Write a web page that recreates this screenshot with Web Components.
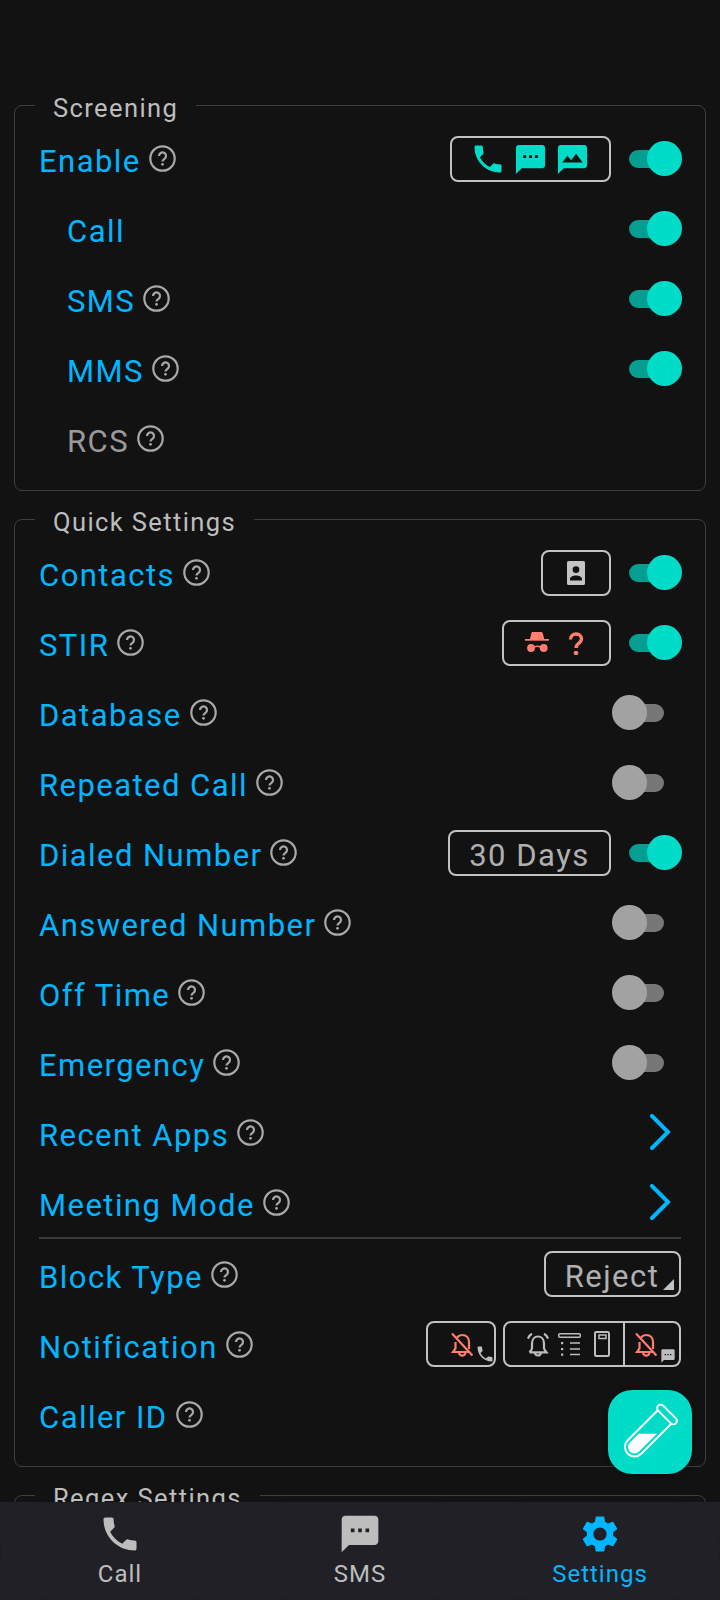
<!DOCTYPE html>
<html>
<head>
<meta charset="utf-8">
<style>
  html, body { margin: 0; padding: 0; background: #121212; }
  body { font-family: Roboto, "Liberation Sans", sans-serif; }
</style>
</head>
<body>
<app-shell>
  <settings-group legend="Screening">
    <setting-row help>Enable
      <chip-box slot="end" width="161" style="padding-right:2px">
        <ui-icon name="phone" size="36" color="#00dcc8"></ui-icon>
        <ui-icon name="sms" size="35" color="#00dcc8" gap="7"></ui-icon>
        <ui-icon name="mms" size="35" color="#00dcc8" gap="7"></ui-icon>
      </chip-box>
      <toggle-switch slot="end" checked></toggle-switch>
    </setting-row>
    <setting-row indent>Call<toggle-switch slot="end" checked></toggle-switch></setting-row>
    <setting-row indent help>SMS<toggle-switch slot="end" checked></toggle-switch></setting-row>
    <setting-row indent help>MMS<toggle-switch slot="end" checked></toggle-switch></setting-row>
    <setting-row indent help muted>RCS</setting-row>
  </settings-group>

  <settings-group legend="Quick Settings">
    <setting-row help>Contacts
      <chip-box slot="end" width="70"><ui-icon name="contact" size="24" color="#c4c4c4"></ui-icon></chip-box>
      <toggle-switch slot="end" checked></toggle-switch>
    </setting-row>
    <setting-row help>STIR
      <chip-box slot="end" width="109" style="padding-right:1px">
        <ui-icon name="incognito" size="24" color="#ff7e6e"></ui-icon>
        <ui-icon name="question" size="24" color="#ff7e6e" gap="15"></ui-icon>
      </chip-box>
      <toggle-switch slot="end" checked></toggle-switch>
    </setting-row>
    <setting-row help>Database<toggle-switch slot="end"></toggle-switch></setting-row>
    <setting-row help>Repeated Call<toggle-switch slot="end"></toggle-switch></setting-row>
    <setting-row help>Dialed Number
      <chip-box slot="end" width="163" text>30 Days</chip-box>
      <toggle-switch slot="end" checked></toggle-switch>
    </setting-row>
    <setting-row help>Answered Number<toggle-switch slot="end"></toggle-switch></setting-row>
    <setting-row help>Off Time<toggle-switch slot="end"></toggle-switch></setting-row>
    <setting-row help>Emergency<toggle-switch slot="end"></toggle-switch></setting-row>
    <setting-row help>Recent Apps<ui-icon slot="end" name="chevron" size="36" color="#00b6ff"></ui-icon></setting-row>
    <setting-row help>Meeting Mode<ui-icon slot="end" name="chevron" size="36" color="#00b6ff"></ui-icon></setting-row>
    <group-divider></group-divider>
    <setting-row help>Block Type
      <chip-box slot="end" width="137" text caret>Reject</chip-box>
    </setting-row>
    <setting-row help>Notification
      <notify-chips slot="end"></notify-chips>
    </setting-row>
    <setting-row help>Caller ID</setting-row>
  </settings-group>

  <settings-group legend="Regex Settings"></settings-group>
</app-shell>

<script>
const ICONS = {
  phone: '<path fill="currentColor" d="M6.62 10.79c1.44 2.83 3.76 5.14 6.59 6.59l2.2-2.2c.27-.27.67-.36 1.02-.24 1.12.37 2.33.57 3.57.57.55 0 1 .45 1 1V20c0 .55-.45 1-1 1-9.39 0-17-7.61-17-17 0-.55.45-1 1-1h3.5c.55 0 1 .45 1 1 0 1.25.2 2.45.57 3.57.11.35.03.74-.25 1.02l-2.2 2.2z"/>',
  sms: '<path fill="currentColor" d="M20 2H4c-1.1 0-1.99.9-1.99 2L2 22l4-4h14c1.1 0 2-.9 2-2V4c0-1.1-.9-2-2-2zM9 11H7V9h2v2zm4 0h-2V9h2v2zm4 0h-2V9h2v2z"/>',
  mms: '<path fill="currentColor" d="M20 2H4c-1.1 0-1.99.9-1.99 2L2 22l4-4h14c1.1 0 2-.9 2-2V4c0-1.1-.9-2-2-2zM5 14l3.5-4.5 2.5 3.01L14.5 8l4.5 6H5z"/>',
  settings: '<path fill="currentColor" d="M19.14 12.94c.04-.3.06-.61.06-.94 0-.32-.02-.64-.07-.94l2.03-1.58c.18-.14.23-.41.12-.61l-1.92-3.32c-.12-.22-.37-.29-.59-.22l-2.39.96c-.5-.38-1.03-.7-1.62-.94l-.36-2.54c-.04-.24-.24-.41-.48-.41h-3.84c-.24 0-.43.17-.47.41l-.36 2.54c-.59.24-1.13.57-1.62.94l-2.39-.96c-.22-.08-.47 0-.59.22L2.74 8.87c-.12.21-.08.47.12.61l2.03 1.58c-.05.3-.09.63-.09.94s.02.64.07.94l-2.03 1.58c-.18.14-.23.41-.12.61l1.92 3.32c.12.22.37.29.59.22l2.39-.96c.5.38 1.03.7 1.62.94l.36 2.54c.05.24.24.41.48.41h3.84c.24 0 .44-.17.47-.41l.36-2.54c.59-.24 1.13-.56 1.62-.94l2.39.96c.22.08.47 0 .59-.22l1.92-3.32c.12-.22.07-.47-.12-.61l-2.01-1.58zM12 15.6c-1.98 0-3.6-1.62-3.6-3.6s1.62-3.6 3.6-3.6 3.6 1.62 3.6 3.6-1.62 3.6-3.6 3.6z"/>',
  contact: '<path fill="currentColor" fill-rule="evenodd" d="M4.5 0h15A1.5 1.5 0 0 1 21 1.5v21a1.5 1.5 0 0 1-1.5 1.5h-15A1.5 1.5 0 0 1 3 22.5v-21A1.5 1.5 0 0 1 4.5 0zM12 5.2a3.4 3.4 0 1 0 0 6.8 3.4 3.4 0 0 0 0-6.8zM6 19.4h12v-1.6c0-2.3-3.8-3.4-6-3.4s-6 1.100-6 3.400z"/>',
  incognito: '<g fill="currentColor"><path d="M5 8 6.300 2.200C6.500 1.300 7.100 1 8 1h8c.9 0 1.500.3 1.800 1.200L19.200 8z"/><rect x="0" y="8" width="24" height="1.700"/><circle cx="6" cy="17" r="3.900"/><circle cx="18.700" cy="17" r="3.900"/></g><path d="M9 16.300q3.300-2 6.500 0" fill="none" stroke="currentColor" stroke-width="1.500"/>',
  question: '<path d="M6.500 8.500C6.500 4.500 9.300 3 12 3c3 0 5.500 1.800 5.500 5 0 4.200-5.500 4.200-5.500 9" fill="none" stroke="currentColor" stroke-width="3.400"/><circle cx="12" cy="22" r="2.300" fill="currentColor"/>',
  chevron: '<path d="M7 2 23 18 7 34" fill="none" stroke="currentColor" stroke-width="4" stroke-linecap="round"/>',
  belloff: '<g fill="none" stroke="currentColor" stroke-width="2.200"><path d="M6 5.500C7.300 3.900 9.200 3 11.300 3c4 0 6.700 3 6.700 7.500V17"/><path d="M4.500 10v6.500L2 20h17"/><path d="M8 20.500a3.200 3.200 0 0 0 6.400 0"/></g><path d="M1 1.500 21.500 23.500" stroke="currentColor" stroke-width="2.200"/>',
  bellalarm: '<g fill="none" stroke="currentColor" stroke-width="2.200"><path d="M5 17V11.500c0-4.200 2.600-7 6-7s6 2.800 6 7V17"/><path d="M2.500 20.300h17L17 17M2.500 20.300 5 17"/><path d="M8 20.500a3 3 0 0 0 6 0"/><path d="M1 6.500C1.800 4.300 3 2.800 4.900 1.700M21 6.500c-.8-2.200-2-3.700-3.900-4.800"/></g>',
  bars: '<g fill="none" stroke="currentColor"><rect x=".75" y="1.750" width="21.500" height="3.500" rx="1" stroke-width="1.500"/><path d="M12 11h10M12 17h10M12 22.500h10" stroke-width="1.700"/></g><g fill="currentColor"><rect x="3" y="10" width="2.200" height="2.200"/><rect x="3" y="16" width="2.200" height="2.200"/><rect x="3" y="21.500" width="2.200" height="2.200"/></g>',
  device: '<g fill="none" stroke="currentColor"><rect x="1" y="1" width="14" height="24" rx="1.200" stroke-width="2"/><rect x="5" y="4" width="7" height="3.500" stroke-width="1.500"/></g>'
};
const VIEW = { chevron: "0 0 36 36", belloff: "0 0 22 25", bellalarm: "0 0 22 25", bars: "0 0 23 25", device: "0 0 16 26" };

class UiIcon extends HTMLElement {
  connectedCallback() {
    const name = this.getAttribute("name");
    const size = this.getAttribute("size") || 24;
    const w = this.getAttribute("w") || size;
    const color = this.getAttribute("color") || "currentColor";
    const gap = this.getAttribute("gap") || 0;
    this.attachShadow({ mode: "open" }).innerHTML = `
      <style>
        :host { display: block; flex: none; line-height: 0; color: ${color}; margin-left: ${gap}px; }
        svg { display: block; }
      </style>
      <svg width="${w}" height="${size}" viewBox="${VIEW[name] || "0 0 24 24"}">${ICONS[name]}</svg>`;
  }
}
customElements.define("ui-icon", UiIcon);

class HelpIcon extends HTMLElement {
  constructor() {
    super();
    this.attachShadow({ mode: "open" }).innerHTML = `
      <style>
        :host { display: block; flex: none; width: 27px; height: 27px; margin-left: 8px; color: #a8a8a8; }
        svg { display: block; }
      </style>
      <svg width="27" height="27" viewBox="0 0 27 27" fill="none" stroke="currentColor">
        <circle cx="13.500" cy="13.500" r="12.200" stroke-width="2.200"/>
        <path d="M10 11a3.500 3.500 0 1 1 5.500 2.800c-1.100.8-2 1.300-2 2.600" stroke-width="2.200"/>
        <circle cx="13.500" cy="19.300" r="1.400" fill="currentColor" stroke="none"/>
      </svg>`;
  }
}
customElements.define("help-icon", HelpIcon);

class ToggleSwitch extends HTMLElement {
  constructor() {
    super();
    this.attachShadow({ mode: "open" }).innerHTML = `
      <style>
        :host { display: block; flex: none; position: relative; width: 70px; height: 35px; margin-right: -1px; }
        .track { position: absolute; left: 17px; top: 9px; width: 35px; height: 18px; border-radius: 9px; background: #777; }
        .thumb { position: absolute; left: 0; top: 0; width: 35px; height: 35px; border-radius: 50%; background: #a2a2a2; }
        :host([checked]) .track { background: #069e90; }
        :host([checked]) .thumb { left: 35px; background: #00dcc8; }
      </style>
      <div class="track"></div><div class="thumb"></div>`;
  }
}
customElements.define("toggle-switch", ToggleSwitch);

class ChipBox extends HTMLElement {
  connectedCallback() {
    const width = this.getAttribute("width");
    this.attachShadow({ mode: "open" }).innerHTML = `
      <style>
        :host { display: flex; flex: none; box-sizing: border-box; position: relative; align-items: center; justify-content: center; width: ${width}px; height: 46px; margin: 2px 1px 0 0; border: 2px solid #c2c2c2; border-radius: 8px; color: #b0b0b0; font-size: 31px; letter-spacing: 1.5px; white-space: nowrap; }
        :host([text]) { padding-top: 4px; }
        :host([caret]) { padding-left: 19px; padding-right: 20px; letter-spacing: 1.500px; margin: 0; }
        :host([caret])::after { content: ""; position: absolute; right: 5px; bottom: 5px; border-style: solid; border-width: 0 0 11px 11px; border-color: transparent transparent #c2c2c2 transparent; }
      </style>
      <slot></slot>`;
  }
}
customElements.define("chip-box", ChipBox);

class NotifyChips extends HTMLElement {
  constructor() {
    super();
    this.attachShadow({ mode: "open" }).innerHTML = `
      <style>
        :host { display: flex; flex: none; gap: 7px; color: #bdbdbd; }
        .box { box-sizing: border-box; display: flex; height: 46px; border: 2px solid #c2c2c2; border-radius: 8px; }
        .seg { display: flex; align-items: center; box-sizing: border-box; }
        .one { width: 70px; padding-left: 23px; }
        .two { width: 178px; }
        .left { width: 120px; padding-left: 22px; border-right: 2px solid #c2c2c2; }
        .right { padding-left: 10px; }
        .low { align-self: flex-end; margin-bottom: 1px; }
      </style>
      <div class="box one seg">
        <ui-icon name="belloff" size="25" w="22" color="#ff7e6e"></ui-icon>
        <ui-icon class="low" name="phone" size="20" gap="2"></ui-icon>
      </div>
      <div class="box two">
        <div class="seg left">
          <ui-icon name="bellalarm" size="25" w="22"></ui-icon>
          <ui-icon name="bars" size="25" w="23" gap="9"></ui-icon>
          <ui-icon name="device" size="26" w="16" gap="13"></ui-icon>
        </div>
        <div class="seg right">
          <ui-icon name="belloff" size="25" w="22" color="#ff7e6e"></ui-icon>
          <ui-icon class="low" name="sms" size="16" gap="3"></ui-icon>
        </div>
      </div>`;
  }
}
customElements.define("notify-chips", NotifyChips);

class SettingRow extends HTMLElement {
  connectedCallback() {
    const help = this.hasAttribute("help") ? "<help-icon></help-icon>" : "";
    this.attachShadow({ mode: "open" }).innerHTML = `
      <style>
        :host { display: flex; align-items: center; height: 70px; color: #00b6ff; font-size: 31px; letter-spacing: 1.450px; white-space: nowrap; }
        :host([indent]) { padding-left: 28px; }
        :host([muted]) { color: #9a9a9a; }
        .text { padding-top: 7px; }
        .end { margin-left: auto; display: flex; align-items: center; }
        help-icon { margin-top: 1px; }
      </style>
      <span class="text"><slot></slot></span>${help}
      <div class="end"><slot name="end"></slot></div>`;
  }
}
customElements.define("setting-row", SettingRow);

class GroupDivider extends HTMLElement {
  constructor() {
    super();
    this.attachShadow({ mode: "open" }).innerHTML = `<style>:host { display: block; height: 2px; background: #3a3a3a; }</style>`;
  }
}
customElements.define("group-divider", GroupDivider);

class SettingsGroup extends HTMLElement {
  connectedCallback() {
    this.attachShadow({ mode: "open" }).innerHTML = `
      <style>
        :host { display: block; margin-bottom: 13px; }
        fieldset { margin: 0; padding: 3px 24px 17px 24px; border: 1px solid #3e3e3e; border-radius: 8px; min-width: 0; }
        legend { margin-left: -4px; padding: 0 18px; height: 30px; line-height: 37px; font-size: 25.500px; letter-spacing: 1.400px; color: #bdbdbd; }
      </style>
      <fieldset>
        <legend>${this.getAttribute("legend")}</legend>
        <slot></slot>
      </fieldset>`;
  }
}
customElements.define("settings-group", SettingsGroup);

class NavItem extends HTMLElement {
  connectedCallback() {
    this.attachShadow({ mode: "open" }).innerHTML = `
      <style>
        :host { display: flex; flex-direction: column; align-items: center; box-sizing: border-box; height: 98px; padding-top: 9px; border: 1px solid #1e1e24; border-radius: 46px; color: #bdbdbd; font-size: 24px; letter-spacing: 1px; }
        :host([active]) { color: #00b6ff; }
        span { margin-top: 3px; line-height: 30px; }
      </style>
      <ui-icon name="${this.getAttribute("icon")}" size="44"></ui-icon>
      <span><slot></slot></span>`;
  }
}
customElements.define("nav-item", NavItem);

class BottomNav extends HTMLElement {
  constructor() {
    super();
    this.attachShadow({ mode: "open" }).innerHTML = `
      <style>
        :host { display: grid; grid-template-columns: repeat(3, 1fr); flex: none; height: 98px; background: #202026; }
      </style>
      <nav-item icon="phone">Call</nav-item>
      <nav-item icon="sms">SMS</nav-item>
      <nav-item icon="settings" active>Settings</nav-item>`;
  }
}
customElements.define("bottom-nav", BottomNav);

class FabButton extends HTMLElement {
  constructor() {
    super();
    this.attachShadow({ mode: "open" }).innerHTML = `
      <style>
        :host { display: block; position: absolute; left: 608px; top: 1390px; width: 84px; height: 84px; border-radius: 24px; background: #00dcc8; box-shadow: 0 2px 6px rgba(0,0,0,.35); }
        svg { display: block; }
      </style>
      <svg width="84" height="84" viewBox="0 0 84 84">
        <defs><clipPath id="liq"><rect x="0" y="43.700" width="84" height="40"/></clipPath></defs>
        <g transform="translate(59 24.500) rotate(45)" fill="none" stroke="#fff" stroke-width="2">
          <rect x="-12.500" y="-3.500" width="25" height="7" rx="3.500"/>
          <path d="M-9.500 3.500V46a9.500 9.500 0 0 0 19 0V3.500"/>
        </g>
        <g clip-path="url(#liq)">
          <g transform="translate(59 24.500) rotate(45)">
            <path d="M-6.500 3V46a6.500 6.500 0 0 0 13 0V3z" fill="#fff"/>
          </g>
        </g>
      </svg>`;
  }
}
customElements.define("fab-button", FabButton);

class AppShell extends HTMLElement {
  constructor() {
    super();
    this.attachShadow({ mode: "open" }).innerHTML = `
      <style>
        :host { display: flex; flex-direction: column; position: relative; width: 720px; height: 1600px; overflow: hidden; background: #121212; }
        .scroll { flex: 1; min-height: 0; overflow: hidden; padding: 90px 14px 0 14px; }
      </style>
      <div class="scroll"><slot></slot></div>
      <bottom-nav></bottom-nav>
      <fab-button></fab-button>`;
  }
}
customElements.define("app-shell", AppShell);
</script>
</body>
</html>
